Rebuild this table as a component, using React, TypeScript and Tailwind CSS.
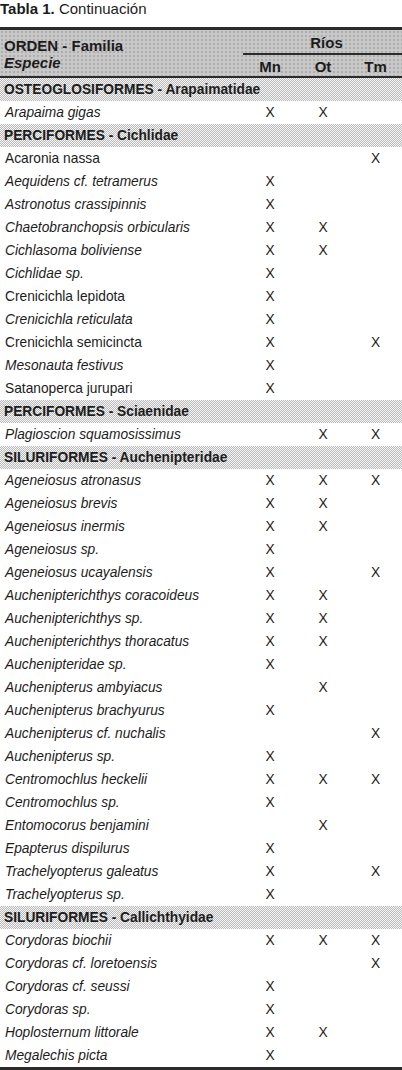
import React from 'react';

type Row =
  | { kind: 'family'; label: string }
  | { kind: 'species'; name: string; italic?: boolean; mn?: boolean; ot?: boolean; tm?: boolean };

const rows: Row[] = [
  { kind: 'family', label: 'OSTEOGLOSIFORMES - Arapaimatidae' },
  { kind: 'species', name: 'Arapaima gigas', italic: true, mn: true, ot: true },
  { kind: 'family', label: 'PERCIFORMES - Cichlidae' },
  { kind: 'species', name: 'Acaronia nassa', tm: true },
  { kind: 'species', name: 'Aequidens cf. tetramerus', italic: true, mn: true },
  { kind: 'species', name: 'Astronotus crassipinnis', italic: true, mn: true },
  { kind: 'species', name: 'Chaetobranchopsis orbicularis', italic: true, mn: true, ot: true },
  { kind: 'species', name: 'Cichlasoma boliviense', italic: true, mn: true, ot: true },
  { kind: 'species', name: 'Cichlidae sp.', italic: true, mn: true },
  { kind: 'species', name: 'Crenicichla lepidota', mn: true },
  { kind: 'species', name: 'Crenicichla reticulata', italic: true, mn: true },
  { kind: 'species', name: 'Crenicichla semicincta', mn: true, tm: true },
  { kind: 'species', name: 'Mesonauta festivus', italic: true, mn: true },
  { kind: 'species', name: 'Satanoperca jurupari', mn: true },
  { kind: 'family', label: 'PERCIFORMES - Sciaenidae' },
  { kind: 'species', name: 'Plagioscion squamosissimus', italic: true, ot: true, tm: true },
  { kind: 'family', label: 'SILURIFORMES - Auchenipteridae' },
  { kind: 'species', name: 'Ageneiosus atronasus', italic: true, mn: true, ot: true, tm: true },
  { kind: 'species', name: 'Ageneiosus brevis', italic: true, mn: true, ot: true },
  { kind: 'species', name: 'Ageneiosus inermis', italic: true, mn: true, ot: true },
  { kind: 'species', name: 'Ageneiosus sp.', italic: true, mn: true },
  { kind: 'species', name: 'Ageneiosus ucayalensis', italic: true, mn: true, tm: true },
  { kind: 'species', name: 'Auchenipterichthys coracoideus', italic: true, mn: true, ot: true },
  { kind: 'species', name: 'Auchenipterichthys sp.', italic: true, mn: true, ot: true },
  { kind: 'species', name: 'Auchenipterichthys thoracatus', italic: true, mn: true, ot: true },
  { kind: 'species', name: 'Auchenipteridae sp.', italic: true, mn: true },
  { kind: 'species', name: 'Auchenipterus ambyiacus', italic: true, ot: true },
  { kind: 'species', name: 'Auchenipterus brachyurus', italic: true, mn: true },
  { kind: 'species', name: 'Auchenipterus cf. nuchalis', italic: true, tm: true },
  { kind: 'species', name: 'Auchenipterus sp.', italic: true, mn: true },
  { kind: 'species', name: 'Centromochlus heckelii', italic: true, mn: true, ot: true, tm: true },
  { kind: 'species', name: 'Centromochlus sp.', italic: true, mn: true },
  { kind: 'species', name: 'Entomocorus benjamini', italic: true, ot: true },
  { kind: 'species', name: 'Epapterus dispilurus', italic: true, mn: true },
  { kind: 'species', name: 'Trachelyopterus galeatus', italic: true, mn: true, tm: true },
  { kind: 'species', name: 'Trachelyopterus sp.', italic: true, mn: true },
  { kind: 'family', label: 'SILURIFORMES - Callichthyidae' },
  { kind: 'species', name: 'Corydoras biochii', italic: true, mn: true, ot: true, tm: true },
  { kind: 'species', name: 'Corydoras cf. loretoensis', italic: true, tm: true },
  { kind: 'species', name: 'Corydoras cf. seussi', italic: true, mn: true },
  { kind: 'species', name: 'Corydoras sp.', italic: true, mn: true },
  { kind: 'species', name: 'Hoplosternum littorale', italic: true, mn: true, ot: true },
  { kind: 'species', name: 'Megalechis picta', italic: true, mn: true },
];

function Mark({ on }: { on?: boolean }) {
  return <div className="text-center">{on ? 'X' : ''}</div>;
}

export default function App() {
  return (
    <div className="w-[402px] h-[1070px] bg-white text-[#1c1c1c] font-['Liberation_Sans',Arial,sans-serif] overflow-hidden">
      {/* Caption */}
      <div className="h-[27px] text-[15px] leading-[17px]">
        <span className="font-bold">Tabla 1.</span> Continuación
      </div>

      {/* Table */}
      <div className="border-t-[3px] border-b-[3px] border-[#2b2b2b]">
        {/* Header */}
        <div className="grid grid-cols-[243px_1fr] border-b-2 border-[#2b2b2b] bg-[#c8c8c8] bg-[radial-gradient(circle,#8e8e8e_0.6px,transparent_0.8px)] bg-[length:4px_4px] text-[15px] font-bold">
          <div className="pl-[4px] pt-[7px] leading-[17px]">
            <div>ORDEN - Familia</div>
            <div className="italic">Especie</div>
          </div>
          <div>
            <div className="h-[25px] pt-[4px] leading-[17px] text-center border-b-2 border-[#2b2b2b] pl-[8px]">Ríos</div>
            <div className="grid grid-cols-[54px_52px_1fr] h-[21px] pt-[3px] leading-[17px]">
              <div className="text-center">Mn</div>
              <div className="text-center">Ot</div>
              <div className="text-center">Tm</div>
            </div>
          </div>
        </div>

        {/* Body */}
        <div className="text-[13.75px]">
          {rows.map((r, i) =>
            r.kind === 'family' ? (
              <div
                key={i}
                className="h-[23px] leading-[23px] pl-[4px] font-bold bg-[conic-gradient(#bababa_25%,#f6f6f6_0_50%,#bababa_0_75%,#f6f6f6_0)] bg-[length:2px_2px]"
              >
                {r.label}
              </div>
            ) : (
              <div key={i} className="grid grid-cols-[243px_54px_52px_1fr] h-[23px] leading-[23px]">
                <div className={r.italic ? 'pl-[5px] italic' : 'pl-[5px]'}>{r.name}</div>
                <Mark on={r.mn} />
                <Mark on={r.ot} />
                <Mark on={r.tm} />
              </div>
            )
          )}
        </div>
      </div>
    </div>
  );
}
